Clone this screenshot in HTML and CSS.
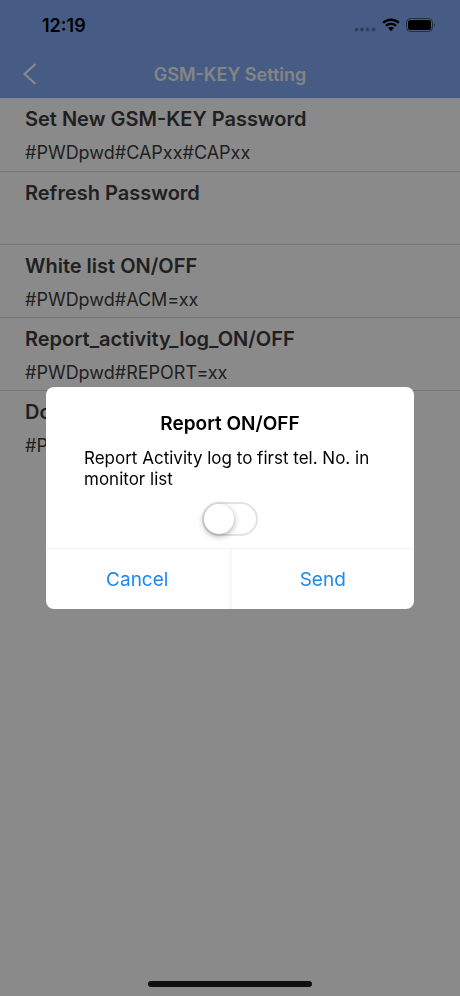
FILE: index.html
```html
<!DOCTYPE html>
<html lang="en">
  <head>
    <meta charset="UTF-8" />
    <meta name="viewport" content="width=device-width, initial-scale=1.0" />
    <title>GSM-KEY Setting</title>
    <link rel="stylesheet" href="styles.css">
  </head>
  <body>
    <header class="header">
      <div class="status-bar">
        <span class="time">12:19</span>
        <div class="status-icons">
          <svg class="signal" width="22" height="14" viewBox="0 0 22 14">
            <circle cx="2.500" cy="11.500" r="1.900" />
            <circle cx="8" cy="11.500" r="1.900" />
            <circle cx="13.500" cy="11.500" r="1.900" />
            <circle cx="19.500" cy="11.500" r="1.900" />
          </svg>
          <svg width="18" height="14" viewBox="0 0 18 14">
            <path d="M9 0.6C5.6 0.6 2.5 1.9 0.3 4.1L2 5.8C3.8 4 6.300 3 9 3S14.200 4 16 5.800L17.700 4.100C15.500 1.900 12.400 0.600 9 0.600Z" />
            <path d="M9 4.700C6.800 4.700 4.700 5.600 3.200 7L4.900 8.700C6 7.700 7.400 7.100 9 7.100S12 7.700 13.100 8.700L14.800 7C13.300 5.600 11.200 4.700 9 4.700Z" />
            <path d="M9 8.800C7.900 8.800 6.900 9.200 6.100 9.900L9 13.300L11.900 9.900C11.100 9.200 10.100 8.800 9 8.800Z" />
          </svg>
          <svg width="30" height="14" viewBox="0 0 30 14">
            <rect class="battery-case" x="0.500" y="0.500" width="26" height="13" rx="4" />
            <rect x="2" y="2" width="23" height="10" rx="2.500" />
            <path class="battery-tip" d="M27.800 5V9C29.200 8.500 29.200 5.500 27.800 5Z" />
          </svg>
        </div>
      </div>
      <div class="nav-bar">
        <button class="back" type="button" aria-label="Back">
          <svg width="14" height="22" viewBox="0 0 14 22">
            <path d="M12.500 1L1.500 11L12.500 21" />
          </svg>
        </button>
        <h1 class="nav-title">GSM-KEY Setting</h1>
      </div>
    </header>

    <ul class="list">
      <li class="item">
        <h2 class="item-title">Set New GSM-KEY Password</h2>
        <p class="item-code">#PWDpwd#CAPxx#CAPxx</p>
      </li>
      <li class="item">
        <h2 class="item-title">Refresh Password</h2>
      </li>
      <li class="item">
        <h2 class="item-title">White list ON/OFF</h2>
        <p class="item-code">#PWDpwd#ACM=xx</p>
      </li>
      <li class="item">
        <h2 class="item-title">Report_activity_log_ON/OFF</h2>
        <p class="item-code">#PWDpwd#REPORT=xx</p>
      </li>
      <li class="item">
        <h2 class="item-title">Do</h2>
        <p class="item-code">#P</p>
      </li>
    </ul>

    <div class="overlay">
      <form class="dialog" role="dialog" aria-labelledby="dialog-title">
        <div class="dialog-body">
          <h2 class="dialog-title" id="dialog-title">Report ON/OFF</h2>
          <label class="dialog-text" for="report">Report Activity log to first tel. No. in monitor list</label>
          <input class="switch" type="checkbox" id="report" />
        </div>
        <div class="dialog-footer">
          <button class="dialog-button" type="button">Cancel</button>
          <button class="dialog-button" type="button">Send</button>
        </div>
      </form>
    </div>

    <div class="home-indicator"></div>
  </body>
</html>
```

FILE: styles.css
```css
* {
  box-sizing: border-box;
}

body {
  margin: 0;
  background-color: #fff;
  color: #3c3c3c;
  font-family: Inter, "Liberation Sans", sans-serif;
}

h1,
h2,
p,
ul {
  margin: 0;
  padding: 0;
}

button {
  padding: 0;
  border: none;
  background: none;
  font-family: inherit;
}

/* header */
.header {
  height: 98px;
  background-color: #83abf5;
}

.status-bar {
  display: flex;
  justify-content: space-between;
  align-items: center;
  height: 50px;
  padding: 0 24px 0 42px;
  color: #000;
}

.time {
  font-size: 18px;
  font-weight: 600;
}

.status-icons {
  display: flex;
  gap: 6px;
}

.signal {
  opacity: 0.3;
}

.battery-case {
  fill: none;
  stroke: #000;
  opacity: 0.5;
}

.battery-tip {
  opacity: 0.5;
}

.nav-bar {
  display: grid;
  grid-template-columns: 36px 1fr 36px;
  align-items: center;
  height: 48px;
  padding: 0 12px;
}

.back {
  height: 22px;
}

.back path {
  fill: none;
  stroke: #fff;
  stroke-width: 2;
}

.nav-title {
  color: #f4f4f4;
  font-size: 18px;
  font-weight: 600;
  text-align: center;
}

/* list */
.list {
  list-style: none;
}

.item {
  height: 73px;
  padding: 9px 25px 0;
  border-bottom: 1px solid #dcdcdc;
}

.item:first-child {
  height: 74px;
}

.item:last-child {
  border-bottom: none;
}

.item-title {
  margin-bottom: 10px;
  font-size: 20px;
  font-weight: 600;
  line-height: 24px;
}

.item-code {
  font-size: 18px;
  line-height: 24px;
}

/* dialog */
.overlay {
  position: fixed;
  inset: 0;
  display: flex;
  justify-content: center;
  align-items: center;
  background-color: rgba(0, 0, 0, 0.46);
}

.dialog {
  width: 80%;
  border-radius: 8px;
  background-color: #fff;
  color: #000;
  overflow: hidden;
}

.dialog-body {
  display: flex;
  flex-direction: column;
  align-items: center;
  padding: 25px 38px 12px;
}

.dialog-title {
  margin-bottom: 12px;
  font-size: 19px;
  font-weight: 600;
  line-height: 24px;
}

.dialog-text {
  width: 100%;
  margin-bottom: 12px;
  font-size: 17px;
  line-height: 21px;
}

.switch {
  appearance: none;
  width: 56px;
  height: 34px;
  margin: 0;
  border: 2px solid #e3e3e3;
  border-radius: 17px;
}

.switch::before {
  content: "";
  display: block;
  width: 30px;
  height: 30px;
  border-radius: 50%;
  background-color: #fff;
  box-shadow: 0 2px 6px rgba(0, 0, 0, 0.35);
}

.switch:checked {
  background-color: #4cd964;
}

.switch:checked::before {
  margin-left: auto;
}

.dialog-footer {
  display: flex;
  border-top: 1px solid #f4f4f4;
}

.dialog-button {
  flex: 1;
  height: 60px;
  color: #1e88f0;
  font-size: 19px;
}

.dialog-button + .dialog-button {
  border-left: 3px solid #f8f8f8;
}

.home-indicator {
  position: fixed;
  bottom: 9px;
  left: 50%;
  width: 164px;
  height: 6px;
  border-radius: 3px;
  background-color: #111;
  transform: translateX(-50%);
}
```
